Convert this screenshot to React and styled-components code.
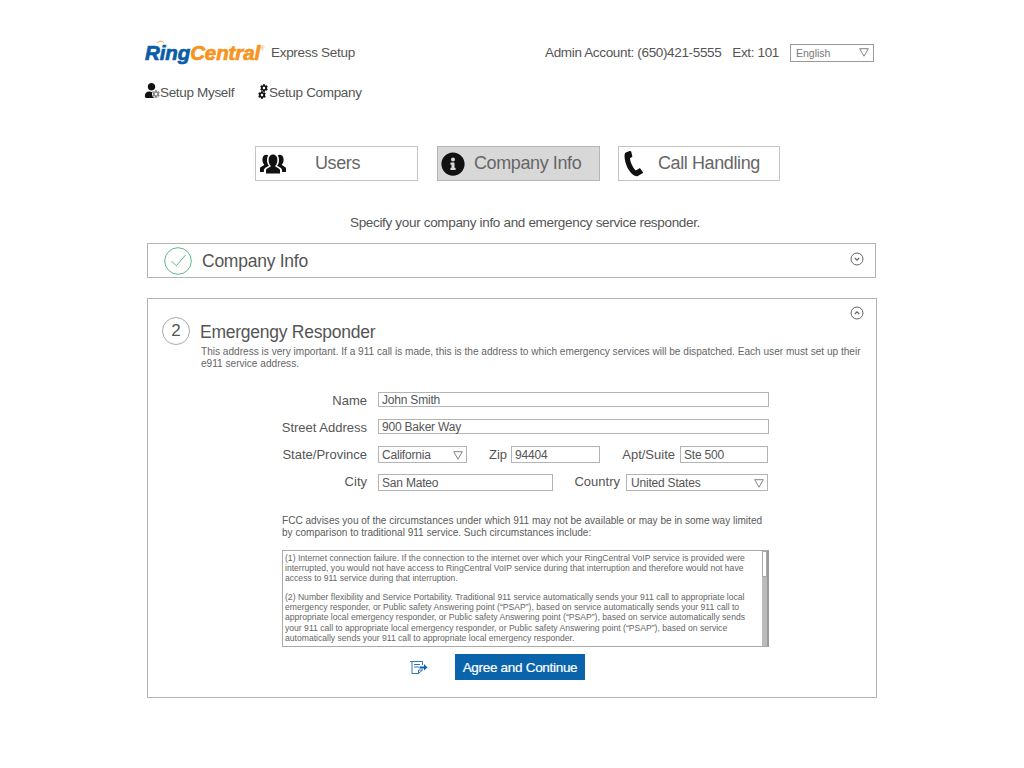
import React from 'react'
import styled, { createGlobalStyle } from 'styled-components'
import { FaInfoCircle, FaUser, FaCog } from 'react-icons/fa'

const GlobalStyle = createGlobalStyle`
  html, body {
    margin: 0;
    padding: 0;
    background: #fff;
  }
  * {
    box-sizing: border-box;
  }
  body {
    font-family: 'Liberation Sans', Arial, sans-serif;
    color: #555;
  }
`

const Page = styled.div`
  width: 1024px;
  height: 768px;
  padding: 42px 147px 0;
  overflow: hidden;
`

const Header = styled.div`
  display: flex;
  align-items: center;
  height: 21px;
  padding-right: 3px;
`

const Logo = styled.div`
  position: relative;
  font-size: 20.5px;
  font-weight: bold;
  font-style: italic;
  letter-spacing: -0.1px;
  width: 124px;
  margin-left: -2px;
  color: #f7941d;
  -webkit-text-stroke: 0.7px currentColor;
  white-space: nowrap;
  span {
    color: #0a5ca8;
  }
  sup {
    font-size: 6px;
    font-weight: normal;
    vertical-align: 10px;
    line-height: 0;
    -webkit-text-stroke: 0;
  }
`

const LogoArcs = styled.svg`
  position: absolute;
  left: 11px;
  top: -2px;
  width: 9px;
  height: 5px;
`

const Product = styled.div`
  font-size: 13.5px;
  letter-spacing: -0.3px;
  margin-left: 2px;
  flex: 1;
`

const Account = styled.div`
  font-size: 13.5px;
  letter-spacing: -0.35px;
  margin-right: 11px;
  span {
    margin-left: 7.5px;
  }
`

const LangSelect = styled.div`
  width: 84px;
  height: 18px;
  border: 1px solid #999;
  display: flex;
  align-items: center;
  justify-content: space-between;
  padding: 0 4px 0 5px;
  font-size: 10.5px;
  color: #777;
`

const Triangle = styled.svg`
  width: 10px;
  height: 9px;
  flex: none;
`

const SetupLinks = styled.div`
  display: flex;
  gap: 24px;
  margin: 18px 0 0 -3px;
  height: 22px;
  align-items: center;
`

const SetupLink = styled.div`
  display: flex;
  align-items: center;
  font-size: 13.5px;
  letter-spacing: -0.33px;
  gap: 1px;
`

const UserBadge = styled.div`
  position: relative;
  width: 15px;
  height: 16px;
  margin-top: -3px;
  color: #111;
`

const BadgeGear = styled.div`
  position: absolute;
  right: -1px;
  bottom: 1px;
  display: flex;
  color: #8a8a8a;
  background: #fff;
  border-radius: 50%;
`

const GearStack = styled.div`
  display: flex;
  flex-direction: column;
  align-items: flex-end;
  width: 10px;
  margin-top: -2px;
  color: #111;
  svg + svg {
    align-self: flex-start;
    margin-top: -1px;
  }
`

const Tabs = styled.div`
  display: flex;
  margin: 43px 0 0 108px;
`

const Tab = styled.div`
  width: ${p => p.$w || 163}px;
  height: 35px;
  margin-left: ${p => p.$ml || 0}px;
  display: flex;
  align-items: center;
  padding-left: ${p => p.$pad}px;
  border: 1px solid ${p => (p.$active ? '#b5b5b5' : '#c4c4c4')};
  background: ${p => (p.$active ? '#d8d8d8' : '#fff')};
  font-size: 18px;
  letter-spacing: -0.4px;
  color: #666;
  svg {
    color: #111;
    flex: none;
  }
`

const TabLabel = styled.span`
  margin-left: ${p => p.$gap}px;
`

const Intro = styled.div`
  text-align: center;
  font-size: 13.5px;
  letter-spacing: -0.33px;
  margin-top: 34px;
  line-height: 16px;
  padding-left: 26px;
`

const CollapsedPanel = styled.div`
  height: 35px;
  margin-top: 12px;
  width: 729px;
  border: 1px solid #b4b4b4;
  display: flex;
  align-items: center;
  padding: 0 11px 0 16px;
`

const PanelTitle = styled.div`
  font-size: 17.5px;
  letter-spacing: -0.25px;
  color: #555;
  flex: 1;
  margin-left: 10px;
  padding-top: 2px;
`

const ToggleSlot = styled.div`
  display: flex;
  margin-top: -3px;
`

const OpenPanel = styled.div`
  position: relative;
  height: 400px;
  width: 730px;
  margin-top: 20px;
  border: 1px solid #b4b4b4;
  padding: 18px 0 0 14px;
`

const ToggleCorner = styled.div`
  position: absolute;
  top: 7px;
  right: 12px;
  display: flex;
`

const StepHead = styled.div`
  display: flex;
  align-items: flex-start;
`

const StepCircle = styled.div`
  width: 28px;
  height: 28px;
  border: 1px solid #aaa;
  border-radius: 50%;
  display: flex;
  align-items: center;
  justify-content: center;
  font-size: 17px;
  flex: none;
`

const StepBody = styled.div`
  margin-left: 10px;
  padding-top: 4px;
  width: 668px;
`

const StepTitle = styled.div`
  font-size: 17.5px;
  letter-spacing: -0.25px;
  line-height: 21px;
  padding-top: 1px;
`

const StepText = styled.div`
  font-size: 10.1px;
  line-height: 12px;
  color: #666;
  margin: 3px 0 0 1px;
`

const Form = styled.div`
  display: flex;
  flex-direction: column;
  margin-top: 21px;
`

const Row = styled.div`
  display: flex;
  align-items: center;
  height: 17px;
  margin-bottom: ${p => p.$mb || 10}px;
`

const Label = styled.div`
  font-size: 13px;
  text-align: right;
  flex: none;
  width: ${p => p.$w}px;
  margin-top: ${p => p.$mt || 0}px;
  margin-left: ${p => p.$ml || 0}px;
  margin-right: ${p => p.$mr}px;
  white-space: nowrap;
`

const Field = styled.div`
  height: ${p => p.$h || 15}px;
  width: ${p => p.$w}px;
  flex: none;
  border: 1px solid #b4b4b4;
  display: flex;
  align-items: center;
  justify-content: space-between;
  padding: 1px 3px 0 ${p => p.$pl || 3}px;
  font-size: 12px;
  letter-spacing: -0.2px;
  color: #555;
`

const Fcc = styled.div`
  font-size: 10.05px;
  line-height: 12px;
  margin: 14px 0 0 120px;
  width: 486px;
  color: #5a5a5a;
`

const Terms = styled.div`
  position: relative;
  margin: 11px 0 0 120px;
  width: 487px;
  height: 97px;
  border: 1px solid #aaa;
  border-right: 2px solid #999;
  padding: 2px 20px 0 2px;
  font-size: 8.6px;
  line-height: 10.1px;
  color: #666;
  p {
    margin: 0 0 9px;
  }
`

const ScrollThumb = styled.div`
  position: absolute;
  top: 0;
  right: 0;
  width: 5px;
  height: 26px;
  background: #fff;
  border: 1px solid #aaa;
`

const ScrollTrack = styled.div`
  position: absolute;
  top: 26px;
  bottom: 0;
  right: 0;
  width: 5px;
  background: #bbb;
`

const Actions = styled.div`
  display: flex;
  align-items: center;
  margin: 7px 0 0 247px;
  gap: 27px;
`

const AgreeButton = styled.button`
  width: 130px;
  height: 26px;
  background: #0a64ab;
  border: none;
  color: #fff;
  font-family: inherit;
  font-size: 13.5px;
  letter-spacing: -0.3px;
  -webkit-text-stroke: 0.2px #fff;
  padding: 0;
`

const Arrow = () => (
  <Triangle viewBox="0 0 10 9">
    <path d="M.7.7h8.6L5 8.2z" fill="none" stroke="#777" strokeWidth="0.9" />
  </Triangle>
)

const Toggle = ({ up }) => (
  <svg width="14" height="14" viewBox="0 0 14 14" fill="none" stroke="#666">
    <circle cx="7" cy="7" r="6" />
    <path d={up ? 'M4.8 8 7 5.8 9.2 8' : 'M4.8 6 7 8.2 9.2 6'} strokeWidth="1.1" />
  </svg>
)

const UsersIcon = () => (
  <svg width="28" height="24" viewBox="0 0 28 24" fill="currentColor">
    <path d="M7 21.500v-3.200c0-1.600 4-2.800 5-4.200-1.500-1.400-2.400-3.400-2.400-6.300C9.600 4.500 11.500 2.500 14 2.500s4.400 2 4.400 5.300c0 2.900-.9 4.900-2.400 6.300 1 1.400 5 2.600 5 4.200v3.200z" />
    <path d="M1 20v-3.600c0-1.400 3.400-2.400 4.300-3.600C4 11.400 3.400 9.700 3.400 7.500c0-3 1.700-4.700 3.900-4.700.7 0 1.400.2 2 .6-.9 1.100-1.300 2.700-1.300 4.500 0 2.400.6 4.300 1.900 5.800-1.400 1-5 2-5 4.600V20z" />
    <path d="M27 20v-3.600c0-1.400-3.400-2.400-4.300-3.600 1.300-1.400 1.900-3.100 1.900-5.300 0-3-1.700-4.700-3.900-4.700-.7 0-1.400.2-2 .6.900 1.100 1.300 2.700 1.300 4.500 0 2.400-.6 4.300-1.900 5.800 1.400 1 5 2 5 4.600V20z" />
  </svg>
)

const PhoneIcon = () => (
  <svg width="20" height="27" viewBox="0 0 20 27" fill="currentColor">
    <path d="M5.500 1 1.800 2.500C.6 3.200.4 5 .6 7.500c.5 6 3.500 13.500 8.500 17.300 2 1.500 3.500 1.700 4.700 1.100l4.800-2.600c.5-.3.500-.8.200-1.300l-2.400-3.300c-.3-.4-.8-.5-1.300-.2l-2.800 1.700c-.5.300-1 .1-1.400-.4C8.500 17 6.500 12.500 6 8.800c0-.6.200-1 .7-1.100l1-.4c.5-.2.700-.6.600-1.100L7.200 1.600C7 1 6.200.7 5.500 1z" />
  </svg>
)

const CheckCircle = () => (
  <svg width="28" height="28" viewBox="0 0 28 28" fill="none" stroke="#5cb98a">
    <circle cx="14" cy="14" r="13.300" />
    <path d="M7.500 14l4.800 4.800L21.500 8" strokeWidth="1" />
  </svg>
)

const DocIcon = () => (
  <svg width="19" height="15" viewBox="0 0 19 15" fill="none" stroke="#2a78b5">
    <path d="M1 1.500h12.500V5M3 1.500v12h6.500l4-3.500V9.500M9.500 13.500V10h4M5 4.500h6M5 7h5" />
    <path d="M10.500 6.500H15V4l3.500 3.500L15 10.500V8.500h-4.500z" fill="#0a64ab" stroke="none" />
  </svg>
)

const App = () => (
  <Page>
    <GlobalStyle />
    <Header>
      <Logo>
        <span>Ring</span>Central<sup>®</sup>
        <LogoArcs viewBox="0 0 9 5" fill="none" stroke="#f7941d" strokeWidth="1">
          <path d="M1 4c2-2.500 5-2.500 7 0" />
        </LogoArcs>
      </Logo>
      <Product>Express Setup</Product>
      <Account>Admin Account: (650)421-5555 <span>Ext: 101</span></Account>
      <LangSelect>English<Arrow /></LangSelect>
    </Header>

    <SetupLinks>
      <SetupLink>
        <UserBadge>
          <FaUser size={15} />
          <BadgeGear><FaCog size={8} /></BadgeGear>
        </UserBadge>
        Setup Myself
      </SetupLink>
      <SetupLink>
        <GearStack>
          <FaCog size={8} />
          <FaCog size={8} />
        </GearStack>
        Setup Company
      </SetupLink>
    </SetupLinks>

    <Tabs>
      <Tab $pad={3}><UsersIcon /><TabLabel $gap={28}>Users</TabLabel></Tab>
      <Tab $ml={19} $active $pad={3}><FaInfoCircle size={24} /><TabLabel $gap={9}>Company Info</TabLabel></Tab>
      <Tab $ml={18} $w={162} $pad={5}><PhoneIcon /><TabLabel $gap={14}>Call Handling</TabLabel></Tab>
    </Tabs>

    <Intro>Specify your company info and emergency service responder.</Intro>

    <CollapsedPanel>
      <CheckCircle />
      <PanelTitle>Company Info</PanelTitle>
      <ToggleSlot><Toggle /></ToggleSlot>
    </CollapsedPanel>

    <OpenPanel>
      <ToggleCorner><Toggle up /></ToggleCorner>
      <StepHead>
        <StepCircle>2</StepCircle>
        <StepBody>
          <StepTitle>Emergengy Responder</StepTitle>
          <StepText>
            This address is very important. If a 911 call is made, this is the address to which emergency services will be dispatched. Each user must set up their e911 service address.
          </StepText>
        </StepBody>
      </StepHead>

      <Form>
        <Row>
          <Label $w={205} $mr={11} $mt={2}>Name</Label>
          <Field $w={391}>John Smith</Field>
        </Row>
        <Row $mb={11}>
          <Label $w={205} $mr={11} $mt={2}>Street Address</Label>
          <Field $w={391}>900 Baker Way</Field>
        </Row>
        <Row $mb={11}>
          <Label $w={205} $mr={11}>State/Province</Label>
          <Field $w={89} $h={17}>California<Arrow /></Field>
          <Label $w={18} $ml={22} $mr={4}>Zip</Label>
          <Field $w={89} $h={17}>94404</Field>
          <Label $w={53} $ml={22} $mr={5}>Apt/Suite</Label>
          <Field $w={88} $h={17}>Ste 500</Field>
        </Row>
        <Row>
          <Label $w={205} $mr={11} $mt={-2}>City</Label>
          <Field $w={175} $h={17}>San Mateo</Field>
          <Label $w={46} $ml={21} $mr={6} $mt={-2}>Country</Label>
          <Field $w={142} $h={17} $pl={4}>United States<Arrow /></Field>
        </Row>
      </Form>

      <Fcc>
        FCC advises you of the circumstances under which 911 may not be available or may be in some way limited by comparison to traditional 911 service. Such circumstances include:
      </Fcc>

      <Terms>
        <p>(1) Internet connection failure. If the connection to the internet over which your RingCentral VoIP service is provided were interrupted, you would not have access to RingCentral VoIP service during that interruption and therefore would not have access to 911 service during that interruption.</p>
        <p>(2) Number flexibility and Service Portability. Traditional 911 service automatically sends your 911 call to appropriate local emergency responder, or Public safety Answering point (“PSAP”), based on service automatically sends your 911 call to appropriate local emergency responder, or Public safety Answering point (“PSAP”), based on service automatically sends your 911 call to appropriate local emergency responder, or Public safety Answering point (“PSAP”), based on service automatically sends your 911 call to appropriate local emergency responder.</p>
        <ScrollThumb />
        <ScrollTrack />
      </Terms>

      <Actions>
        <DocIcon />
        <AgreeButton>Agree and Continue</AgreeButton>
      </Actions>
    </OpenPanel>
  </Page>
)

export default App
